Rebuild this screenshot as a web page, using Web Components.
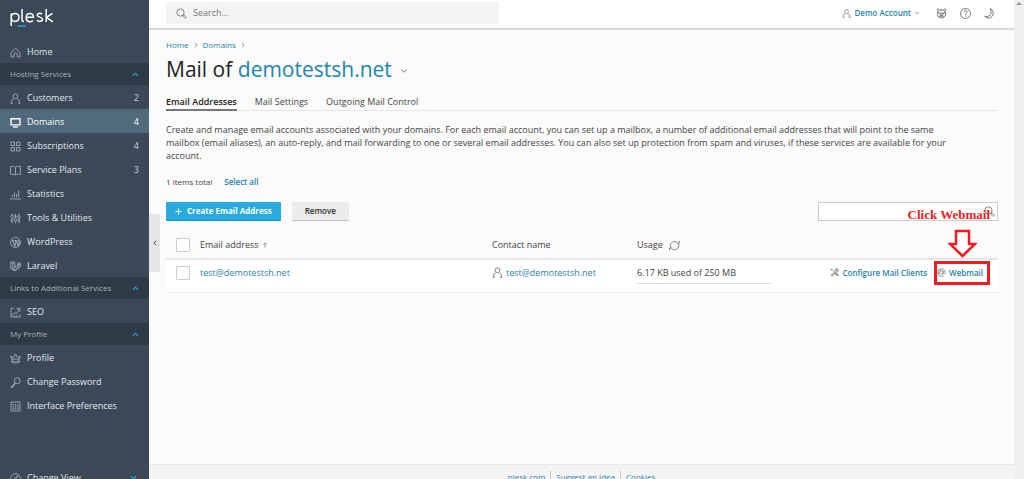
<!DOCTYPE html>
<html lang="en">
<head>
<meta charset="utf-8">
<title>Mail of demotestsh.net - Plesk</title>
<style>
html, body { height: 100%; }
body { margin: 0; overflow: hidden; font: 9px/14px "Open Sans", "Noto Sans", sans-serif; color: #444; background: #fbfbfb;
  --link: #1f84ad; --rule: #e6e6e6; }
</style>
</head>
<body>
<plesk-app></plesk-app>

<script>
const ICONS = {
  home: '<path d="M1.500 14.500V8L8 1.800 14.500 8v6.500h-4V11a2.500 2.500 0 0 0-5 0v3.500z"/>',
  user: '<circle cx="8" cy="4.800" r="3.500"/><path d="M5.500 9 2.500 10.500 1.500 15.300M10.500 9l3 1.500 1 4.800M1.500 14.800h3M11.500 14.800h3"/>',
  screen: '<path stroke-width="2" d="M1.500 2.500h13v9h-13z"/><path stroke-width="2" d="M4.500 14.500h7"/>',
  grid: '<path d="M1.500 1.500h5v5h-5zM9.500 1.500h5v5h-5zM1.500 9.500h5v5h-5zM9.500 9.500h5v5h-5z"/>',
  book: '<path d="M8 3.500V14M8 3.500C7 2 5 2 .8 2v11.500C5 13.500 7 13.500 8 14.500c1-1 3-1 7.200-1V2C11 2 9 2 8 3.500z"/>',
  chart: '<path d="M0 14.500h16M3.500 12V8.500M6.500 12V5M9.500 12V7M12.500 12V2"/>',
  sliders: '<path d="M3 1v2M3 7v8M8 1v7M8 12v3M13 1v3M13 8v7"/><circle cx="3" cy="5" r="2"/><circle cx="8" cy="10" r="2"/><circle cx="13" cy="6" r="2"/><path d="M.5 10.500h4M11 11h4M6 4.500h4"/>',
  wordpress: '<circle cx="8" cy="8" r="7.200"/><path stroke-width="1.500" d="M2.500 5h3M4 5l3 8.500L8.700 8 7.500 5h3M9.500 5l2.500 8 1.600-5c.3-1.500-1.600-2-1.100-3.500"/>',
  laravel: '<path d="M1 2l3-1 3 1v7l4-2V4l2-1.500L15.500 4v4L7 14.500 1 11zM1 2l3 1.500L7 2M4 3.500v8l3 1.500 6-4.500M11 4l2 1 2.500-1M13 5v4M4 11l5-3"/>',
  trend: '<path d="M5 2H1.500v12.500h13V11M3.500 12l3-4 2.500 2 5-7.500M9.500 2h5v5M6.500 12v2M10 12v2"/>',
  crown: '<path d="M2.500 9 1 4.500l4 2L8 1.500l3 5 4-2L13.500 9M2.500 9h11M2.500 9v4.500c2 1.500 9 1.500 11 0V9M3 11.500c3 1.300 7 1.300 10 0"/>',
  key: '<circle cx="10.500" cy="5.500" r="4.300"/><path d="M7.500 8.500 1 15h3v-2h2v-2l2-1.500"/>',
  prefs: '<path d="M1.500 1.500h13v13h-13z"/><path stroke-width="1.800" d="M4 5.500h2M7.200 5.500h2M10.500 5.500h2M4 8.500h2M7.200 8.500h2M10.500 8.500h2M4 11.500h2M7.200 11.500h2M10.500 11.500h2"/>',
  compass: '<circle cx="8" cy="8" r="7"/><path d="M11.500 4 9 9l-4.500 3L7 7z"/>',
  search: '<circle cx="6.500" cy="6.500" r="5.300"/><path d="M10.500 10.500l1.500-.5 3.200 3.500-1.700 1.700L10 12z"/>',
  caret: '<path stroke-width="2" d="M3 5.500 8 10.500l5-5"/>',
  up: '<path stroke-width="2.600" d="M2 11l6-6 6 6"/>',
  down: '<path stroke-width="2.600" d="M2 5l6 6 6-6"/>',
  left: '<path stroke-width="2.600" d="M11 2 5 8l6 6"/>',
  right: '<path stroke-width="2" d="M5 2l6 6-6 6"/>',
  plus: '<path stroke-width="2.400" d="M8 1v14M1 8h14"/>',
  sort: '<path stroke-width="2" d="M8 15V3M3.500 7 8 2.500 12.500 7"/>',
  refresh: '<path d="M2.500 11A6.300 6.300 0 0 1 8 2M1 11.500h4M1 5v0M13.500 5A6.300 6.300 0 0 1 8 14.300M11 4.500h4.500V1M8 2c1.500 0 3 .5 4 1.500M8 14.300c-1.500 0-3-.5-4.500-2"/><path d="M.8 15v-3.500"/>',
  bear: '<circle cx="8" cy="8.500" r="6"/><path d="M3.500 4.500C0 3 1.500 0 4.500 2.300M12.500 4.500c3.500-1.500 2-4.500-1-2.200M2.500 6.500l3 1 1 3-2 3M13.500 6.500l-3 1-1 3 2 3M6.500 10.500h3M5.500 7.500h5M7 3h2"/><path stroke-width="2" d="M7 12h2"/>',
  help: '<circle cx="8" cy="8" r="7.200"/><path d="M5.700 6.200C5.700 3 10.500 3.200 10.300 6c0 1.800-2.300 1.800-2.300 3.800M8 11.200v1.500"/>',
  moon: '<path d="M9 .8c6 2.700 6.500 12-1.500 13.700-2.500.3-5-.8-6.500-2.500 3 1 6 .5 8-2 2-2.700 1.500-6.500 0-9.200z"/>',
  tools: '<path stroke-width="1.500" d="M2 1.500l5 5M9 9l5 5M1.500 2l1 2.500M13.500 1.500C10 1 9 3 9.700 5.500l-8 7.500 1.500 1.500 8-7.500c2.500.5 4-1 3.300-4l-2 1.700-1.500-1.500zM9 10l2-1.500 4 4-1.500 2z"/>',
  mail: '<circle cx="8" cy="8" r="3"/><path stroke-width="1.400" d="M11 5v4.500c.5 2 3.500 1.500 3.500-1.500C14.500 4 11.500 1.300 8 1.300A6.700 6.700 0 0 0 8 14.700c1.500 0 2.700-.3 4-1.200M1.500 10.500 5 6.500M4 3l3.500 2"/>',
};

const define = (name, html, setup) => {
  const template = document.createElement('template');
  template.innerHTML = html;
  customElements.define(name, class extends HTMLElement {
    constructor() {
      super();
      this.attachShadow({ mode: 'open' }).append(template.content.cloneNode(true));
    }
    connectedCallback() { setup?.(this.shadowRoot, this); }
  });
};

define('ui-icon', `
<style>
:host { display: inline-block; flex: none; width: 11px; height: 11px; }
svg { display: block; width: 100%; height: 100%; fill: none; stroke: currentColor; stroke-width: 1.3; }
</style>
<svg viewBox="0 0 16 16" aria-hidden="true"></svg>`,
(root, host) => { root.querySelector('svg').innerHTML = ICONS[host.getAttribute('name')]; });

define('nav-item', `
<style>
:host { display: block; }
a { display: flex; align-items: center; gap: 6px; box-sizing: border-box; height: 24px; padding: 2px 10px 0; color: #e3e7eb; text-decoration: none; }
ui-icon { color: #a3adb7; }
.label { flex: 1; }
.end { color: #c9d0d6; }
:host([active]) a { background: #516a7c; color: #fff; }
:host([active]) ui-icon, :host([active]) .end { color: #fff; }
</style>
<a href="#"><ui-icon></ui-icon><span class="label"><slot></slot></span><span class="end"><slot name="end"></slot></span></a>`,
(root, host) => {
  const fresh = document.createElement('ui-icon');
  fresh.setAttribute('name', host.getAttribute('icon'));
  root.querySelector('ui-icon').replaceWith(fresh);
});

define('nav-group', `
<style>
:host { display: block; }
button { display: flex; align-items: center; justify-content: space-between; width: 100%; height: 22px; padding: 0 10px;
  border: 0; background: #2e3a46; color: #aab2ba; font: 8px/12px "Open Sans", sans-serif; text-align: left; }
ui-icon { width: 7px; height: 7px; color: #28aade; }
</style>
<button type="button" aria-expanded="true"><span id="t"></span><ui-icon name="up"></ui-icon></button>
<slot></slot>`,
(root, host) => { root.getElementById('t').textContent = host.getAttribute('heading'); });

define('side-bar', `
<style>
:host { display: flex; flex-direction: column; flex: none; width: 149px; background: #3a4858; }
.logo { display: block; height: 39px; box-sizing: border-box; padding: 8px 10px 0; }
.logo svg { display: block; width: 45px; height: 20px; }
nav { flex: 1; }
.view ui-icon { width: 7px; height: 7px; color: #28aade; margin-right: 2px; }
</style>
<a class="logo" href="#" aria-label="Plesk"><svg viewBox="0 0 45 20" fill="none" stroke="#fff" stroke-width="1.500" aria-hidden="true">
<path d="M1.200 18V5.500M1.200 9.500C1.200 4 9 4.200 9 9.300S1.200 15 1.200 9.500M12 1v10.500c0 1.500.8 2 2 2M16.500 9.200h7c0-5.200-7.300-5-7.300.2 0 4.800 4.600 5 6.800 3.200M32.200 5.900c-2-1.300-5-.9-5 1.200 0 2.500 5.300 1.600 5.300 4.200 0 2.500-3.700 2.600-5.600 1M36.200 1v13M42.500 5.300l-6 4 6.300 4.500"/>
<path stroke="#28aade" d="M8 18h8"/></svg></a>
<nav>
<nav-item icon="home">Home</nav-item>
<nav-group heading="Hosting Services">
<nav-item icon="user">Customers<span slot="end">2</span></nav-item>
<nav-item icon="screen" active>Domains<span slot="end">4</span></nav-item>
<nav-item icon="grid">Subscriptions<span slot="end">4</span></nav-item>
<nav-item icon="book">Service Plans<span slot="end">3</span></nav-item>
<nav-item icon="chart">Statistics</nav-item>
<nav-item icon="sliders">Tools &amp; Utilities</nav-item>
<nav-item icon="wordpress">WordPress</nav-item>
<nav-item icon="laravel">Laravel</nav-item>
</nav-group>
<nav-group heading="Links to Additional Services">
<nav-item icon="trend">SEO</nav-item>
</nav-group>
<nav-group heading="My Profile">
<nav-item icon="crown">Profile</nav-item>
<nav-item icon="key">Change Password</nav-item>
<nav-item icon="prefs">Interface Preferences</nav-item>
</nav-group>
</nav>
<nav-item class="view" icon="compass">Change View<ui-icon slot="end" name="down"></ui-icon></nav-item>`);

define('top-bar', `
<style>
:host { display: flex; align-items: center; justify-content: space-between; height: 28px; padding: 0 16px 0 17px;
  background: #fff; border-bottom: 2px solid #d9d9d9; color: #777; }
label { display: flex; align-items: center; gap: 6px; flex: 0 1 333px; box-sizing: border-box; height: 22px; padding: 0 10px;
  margin-bottom: 2px; background: #f4f4f4; border-radius: 2px; }
input { flex: 1; min-width: 0; padding: 0; border: 0; background: none; font: inherit; color: #444; outline: 0; }
input::placeholder { color: #777; opacity: 1; }
.tools { display: flex; align-items: center; gap: 13px; margin: 0 3px 2px 0; }
.account { display: flex; align-items: center; gap: 3px; margin-right: 3px; color: var(--link); font-size: 8px; font-weight: 600; text-decoration: none; }
.account ui-icon { color: #777; width: 9px; height: 9px; }
.account .caret { width: 6px; height: 6px; }
button { display: block; padding: 0; border: 0; background: none; color: #666; }
ui-icon { display: block; }
</style>
<label><ui-icon name="search"></ui-icon><input type="text" placeholder="Search..." aria-label="Search"></label>
<div class="tools">
<a class="account" href="#"><ui-icon name="user"></ui-icon>Demo Account<ui-icon class="caret" name="caret"></ui-icon></a>
<button type="button" aria-label="Advisor"><ui-icon name="bear"></ui-icon></button>
<button type="button" aria-label="Help"><ui-icon name="help"></ui-icon></button>
<button type="button" aria-label="Dark theme"><ui-icon name="moon"></ui-icon></button>
</div>`);

define('page-head', `
<style>
:host { display: block; }
a { color: var(--link); text-decoration: none; }
.crumbs { display: flex; align-items: center; gap: 4px; font-size: 8px; line-height: 12px; }
.crumbs ui-icon { width: 6px; height: 6px; color: #777; }
h1 { display: flex; align-items: center; gap: 8px; margin: 4px 0 12px; font: 400 21px/28px "Open Sans", sans-serif; color: #222; }
h1 ui-icon { width: 8px; height: 8px; margin-top: 4px; color: #777; }
.tabs { display: flex; gap: 18px; border-bottom: 1px solid var(--rule); }
.tabs a { height: 14px; color: #444; border-bottom: 2px solid transparent; margin-bottom: -1px; }
.tabs a.on { color: #222; font-weight: 600; border-color: #777; }
p { margin: 12px 0 0; max-width: 792px; line-height: 13px; }
</style>
<nav class="crumbs" aria-label="Breadcrumbs"><a href="#">Home</a><ui-icon name="right"></ui-icon><a href="#">Domains</a><ui-icon name="right"></ui-icon></nav>
<h1><span>Mail of <a href="#">demotestsh.net</a></span><ui-icon name="caret"></ui-icon></h1>
<nav class="tabs"><a class="on" href="#">Email Addresses</a><a href="#">Mail Settings</a><a href="#">Outgoing Mail Control</a></nav>
<p>Create and manage email accounts associated with your domains. For each email account, you can set up a mailbox, a number of additional email addresses that will point to the same mailbox (email aliases), an auto-reply, and mail forwarding to one or several email addresses. You can also set up protection from spam and viruses, if these services are available for your account.</p>`);

define('list-toolbar', `
<style>
:host { display: block; font-size: 8px; }
.count { display: flex; gap: 12px; line-height: 12px; margin: 14px 0; }
a { color: var(--link); font-weight: 600; text-decoration: none; }
.row { display: flex; align-items: center; gap: 11px; }
button { display: flex; align-items: center; justify-content: center; gap: 5px; height: 19px; padding: 0 13px; border: 0; border-bottom: 1px solid #c4c4c4; border-radius: 1px;
  background: #ebebeb; color: #333; font: 600 8px/12px "Open Sans", sans-serif; }
button.primary { padding: 0 9px; background: #28aade; border-color: #1c8dbb; color: #fff; font-weight: 700; }
button.primary ui-icon { width: 7px; height: 7px; }
form { display: flex; align-items: center; box-sizing: border-box; width: 180px; height: 19px; margin-left: auto; padding: 0 2px 0 4px; border: 1px solid #ccc; background: #fff; }
input { flex: 1; min-width: 0; padding: 0; border: 0; outline: 0; font: inherit; }
form button { padding: 0; border: 0; background: none; color: #777; }
</style>
<div class="count"><span>1 items total</span><a href="#">Select all</a></div>
<div class="row">
<button class="primary" type="button"><ui-icon name="plus"></ui-icon>Create Email Address</button>
<button type="button">Remove</button>
<form role="search"><input type="text" aria-label="Filter email addresses"><button type="button" aria-label="Find"><ui-icon name="search"></ui-icon></button></form>
</div>`);

define('click-hint', `
<style>
:host { display: block; position: relative; }
.frame { position: absolute; inset: -5px -7px -5px -3px; border: 3px solid #ed1c24; pointer-events: none; }
.arrow { position: absolute; right: 6px; bottom: 22px; width: 29px; height: 29px; }
.text { position: absolute; right: -7px; bottom: 57px; font: 700 13px/16px "Liberation Serif", serif; color: #ed1c24; white-space: nowrap; }
</style>
<slot></slot><span class="frame"></span>
<svg class="arrow" viewBox="0 0 29 29" fill="#fff" stroke="#ed1c24" stroke-width="2.500" aria-hidden="true"><path d="M8 2h13v13h6L14.500 27 2 15h6z"/></svg>
<span class="text">Click Webmail</span>`);

define('mail-table', `
<style>
:host { display: block; }
table { width: 100%; border-collapse: collapse; table-layout: fixed; }
th, td { padding: 0; text-align: left; vertical-align: middle; font-weight: 400; }
th { height: 26px; border-bottom: 2px solid var(--rule); }
td { height: 32px; background: #fff; border-bottom: 1px solid #ececec; }
.check { width: 34px; } .contact { width: 145px; } .usage { width: 134px; } .actions { width: 227px; }
input { display: block; appearance: none; box-sizing: border-box; width: 14px; height: 14px; margin: 0 0 0 10px; border: 1px solid #ccc; border-radius: 1px; background: #fff; }
td input, td > * { margin-bottom: 7px; }
a { color: var(--link); text-decoration: none; }
ui-icon { color: #777; }
.pair, .acts, .acts a { display: flex; align-items: center; gap: 3px; }
.sort ui-icon { width: 6px; height: 6px; }
.head { gap: 6px; }
.quota { height: 18px; margin: 0; box-sizing: border-box; border-bottom: 1px solid #ddd; margin-bottom: 3px; }
.acts { justify-content: flex-end; gap: 10px; margin-right: 15px; font-size: 8px; font-weight: 600; white-space: nowrap; }
.acts a { gap: 3px; }
.acts ui-icon { width: 9px; height: 9px; }
</style>
<table>
<thead><tr>
<th class="check"><input type="checkbox" aria-label="Select all rows"></th>
<th><span class="pair sort">Email address<ui-icon name="sort"></ui-icon></span></th>
<th class="contact">Contact name</th>
<th class="usage"><span class="pair head">Usage<ui-icon name="refresh"></ui-icon></span></th>
<th class="actions"></th>
</tr></thead>
<tbody><tr>
<td><input type="checkbox" aria-label="Select test@demotestsh.net"></td>
<td><div><a href="#">test@demotestsh.net</a></div></td>
<td><div class="pair"><ui-icon name="user"></ui-icon><a href="#">test@demotestsh.net</a></div></td>
<td><div class="quota">6.17 KB used of 250 MB</div></td>
<td><div class="acts"><a href="#"><ui-icon name="tools"></ui-icon>Configure Mail Clients</a><click-hint><a href="#"><ui-icon name="mail"></ui-icon>Webmail</a></click-hint></div></td>
</tr></tbody>
</table>`);

define('page-foot', `
<style>
:host { display: flex; justify-content: center; align-items: center; height: 24px; border-top: 1px solid #e8e8e8; background: #f4f4f4; font-size: 8px; line-height: 12px; }
a { padding: 0 5px; color: var(--link); text-decoration: none; }
a + a { border-left: 1px solid #ccc; }
</style>
<a href="#">plesk.com</a><a href="#">Suggest an Idea</a><a href="#">Cookies</a>`);

define('plesk-app', `
<style>
:host { display: flex; height: calc(100vh + 10px); }
.body { position: relative; flex: 1; min-width: 0; display: flex; flex-direction: column; }
main { flex: 1; padding: 9px 16px 0 17px; }
mail-table { margin-top: 11px; }
.fold { position: absolute; left: 0; top: 214px; width: 11px; height: 58px; padding: 0 3px; border: 0; border-radius: 0 2px 2px 0; background: #e5e5e5; color: #444; }
.fold ui-icon { display: block; width: 6px; height: 6px; }
.scroll { flex: none; width: 10px; background: #f0f0f0; }
.scroll::before { content: ""; display: block; width: 0; margin: 2px auto; border: 3px solid transparent; border-top: 0; border-bottom: 3px solid #999; }
</style>
<side-bar></side-bar>
<div class="body">
<top-bar></top-bar>
<main><page-head></page-head><list-toolbar></list-toolbar><mail-table></mail-table></main>
<page-foot></page-foot>
<button class="fold" type="button" aria-label="Collapse menu"><ui-icon name="left"></ui-icon></button>
</div>
<div class="scroll"></div>`);
</script>
</body>
</html>
